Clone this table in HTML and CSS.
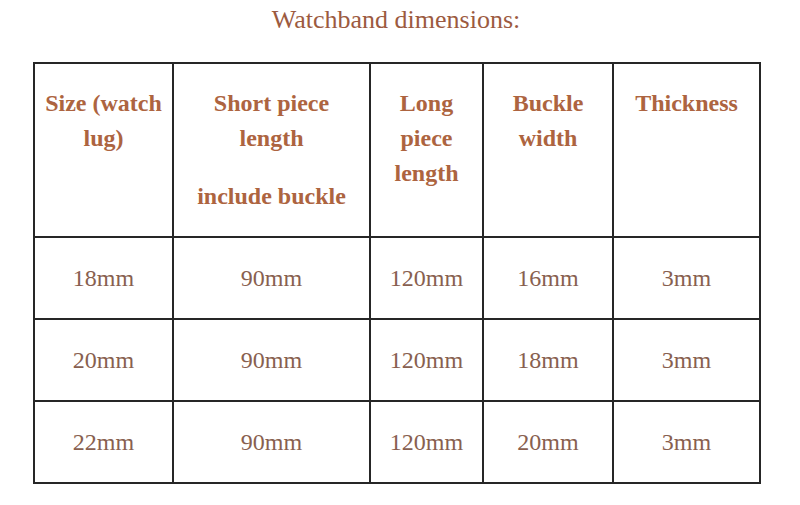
FILE: index.html
```html
<!DOCTYPE html>
<html>
<head>
<meta charset="utf-8">
<link rel="stylesheet" href="styles.css">
</head>
<body>
<div class="page">
  <h1 class="title">Watchband dimensions:</h1>
  <table class="dims">
    <colgroup>
      <col class="c1"><col class="c2"><col class="c3"><col class="c4"><col class="c5">
    </colgroup>
    <thead>
      <tr>
        <th><p>Size (watch lug)</p></th>
        <th><p>Short piece length</p><p class="gap">include buckle</p></th>
        <th><p>Long piece length</p></th>
        <th><p>Buckle width</p></th>
        <th><p>Thickness</p></th>
      </tr>
    </thead>
    <tbody>
      <tr><td>18mm</td><td>90mm</td><td>120mm</td><td>16mm</td><td>3mm</td></tr>
      <tr><td>20mm</td><td>90mm</td><td>120mm</td><td>18mm</td><td>3mm</td></tr>
      <tr><td>22mm</td><td>90mm</td><td>120mm</td><td>20mm</td><td>3mm</td></tr>
    </tbody>
  </table>
</div>
</body>
</html>
```

FILE: styles.css
```css
html, body {
  margin: 0;
  padding: 0;
  background: #ffffff;
}
.page {
  width: 726px;
  margin-left: 33px;
  padding-top: 5px;
  font-family: "Liberation Serif", "Times New Roman", serif;
}
.title {
  margin: 0;
  text-align: center;
  font-size: 26px;
  line-height: 30px;
  font-weight: normal;
  color: #9c5a40;
}
.dims {
  margin-top: 27px;
  width: 726px;
  table-layout: fixed;
  border-collapse: collapse;
}
.c1 { width: 139px; }
.c2 { width: 197px; }
.c3 { width: 113px; }
.c4 { width: 130px; }
.c5 { width: 147px; }
.dims th, .dims td {
  border: 2px solid #262626;
  text-align: center;
  font-size: 24px;
  line-height: 35px;
}
.dims th {
  padding: 22px 8px;
  vertical-align: top;
  font-weight: bold;
  color: #ad6440;
}
.dims th p {
  margin: 0;
}
.dims th p.gap {
  margin-top: 23px;
}
.dims td {
  padding: 23px 8px 22px;
  vertical-align: middle;
  font-weight: normal;
  color: #88604f;
}
```
